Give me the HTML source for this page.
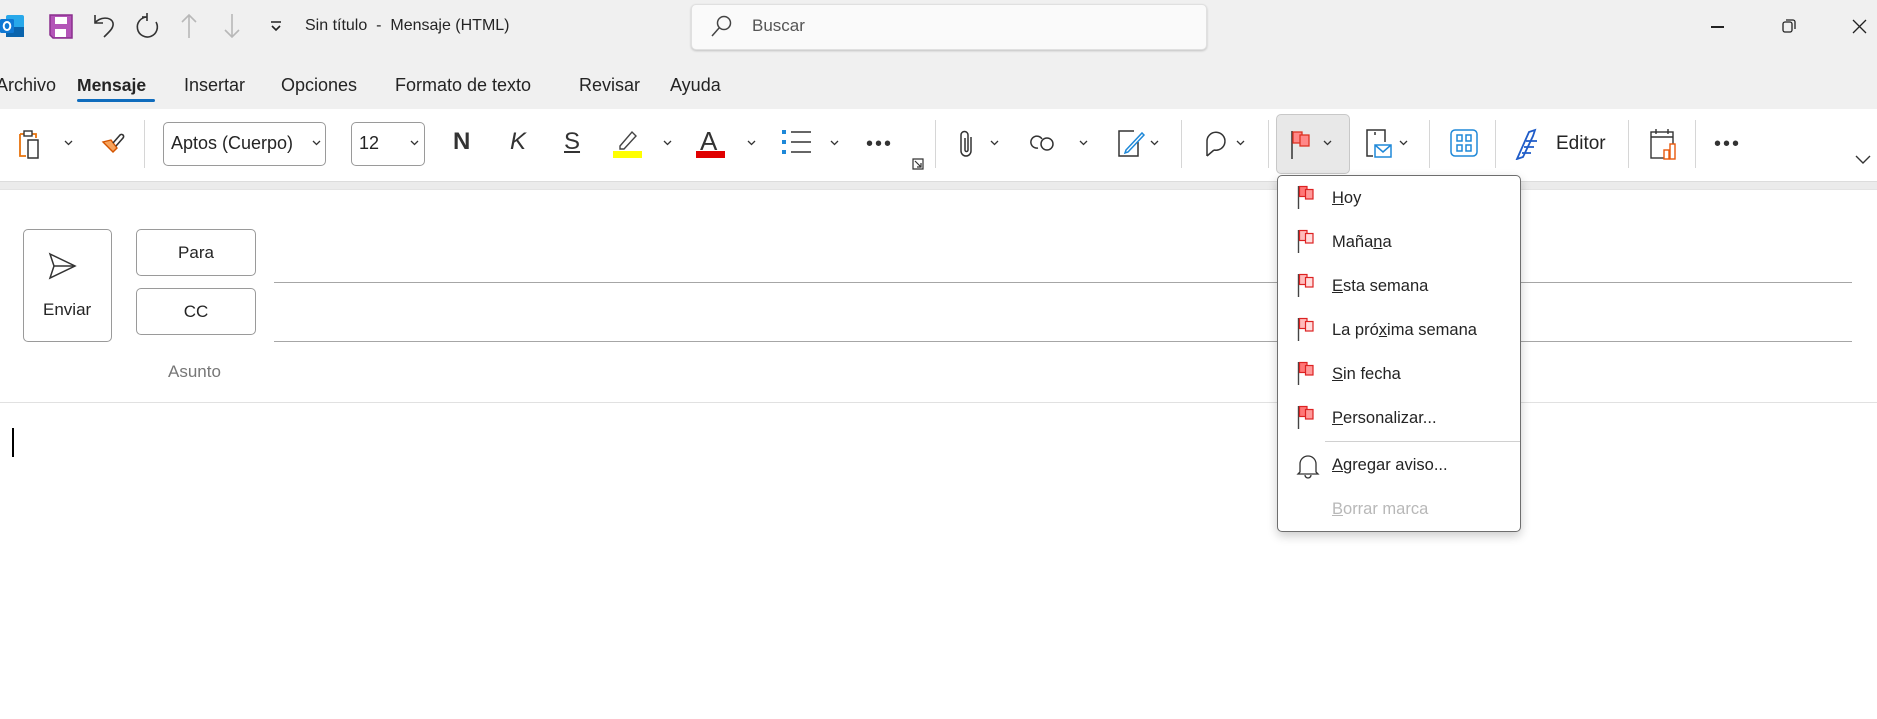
<!DOCTYPE html>
<html><head><meta charset="utf-8">
<style>
*{margin:0;padding:0;box-sizing:border-box}
body{width:1877px;height:719px;overflow:hidden;background:#fff;font-family:"Liberation Sans",sans-serif;color:#242424;position:relative}
.a{position:absolute}
.t{position:absolute;white-space:nowrap}
.top{left:0;top:0;width:1877px;height:109px;background:#f0f0f0}
.rib{left:0;top:109px;width:1877px;height:72px;background:#fff}
.band{left:0;top:181px;width:1877px;height:9px;background:#ebebeb;border-top:1px solid #dcdcdc;border-bottom:1px solid #e3e3e3}
.sep{position:absolute;top:120px;width:1px;height:48px;background:#d6d6d6}
.chev{position:absolute;top:140px;width:9px;height:6px}
.tab{position:absolute;top:75px;font-size:18px;color:#242424}
.mi{position:absolute;left:1332px;font-size:16.5px;color:#242424}
.fl{position:absolute;left:1297px}
</style></head><body>
<svg width="0" height="0" style="position:absolute"><defs>
<path id="cv" d="M1 1L4.5 4.5L8 1" fill="none" stroke="#333" stroke-width="1.3"/>
<g id="fg"><path d="M1.5 1V24" stroke="#444" stroke-width="1.4"/><rect x="2.5" y="1.5" width="7.5" height="10" fill="#f77" stroke="#d22" stroke-width="1.2"/><rect x="8.5" y="4.5" width="7.5" height="9.5" fill="#f99" stroke="#d22" stroke-width="1.2"/></g>
<g id="fl"><path d="M1.5 1V24" stroke="#444" stroke-width="1.4"/><rect x="2.5" y="1.5" width="7.5" height="10" fill="#fbb" stroke="#d22" stroke-width="1.2"/><rect x="8.5" y="4.5" width="7.5" height="9.5" fill="#fdd" stroke="#d22" stroke-width="1.2"/></g>
</defs></svg>
<div class="a top"></div>
<div class="a rib"></div>
<div class="a band"></div>

<!-- title bar icons -->
<svg class="a" style="left:0;top:13px" width="26" height="26" viewBox="0 0 26 26"><rect x="6" y="2" width="18" height="22" rx="2" fill="#28a8ea"/><path d="M6 14 L24 14 L24 24 L6 24Z" fill="#0a64ad"/><rect x="0" y="6" width="14" height="14" rx="1.5" fill="#0f78d4"/><ellipse cx="7" cy="13" rx="3.3" ry="4" fill="none" stroke="#fff" stroke-width="2"/></svg>
<svg class="a" style="left:49px;top:14px" width="25" height="25" viewBox="0 0 25 25"><path d="M1 1H23V24H4L1 21Z" fill="#b455b8" stroke="#8a2f8e" stroke-width="1.5"/><rect x="6" y="3" width="12" height="7" fill="#fff"/><rect x="6" y="15" width="11" height="8" fill="#fff"/></svg>
<svg class="a" style="left:92px;top:12px" width="26" height="28" viewBox="0 0 26 28" fill="none" stroke="#333" stroke-width="1.6"><path d="M3 3V11H11"/><path d="M3 11C7 5 19 4 21 11C22 16 17 20 12 25"/></svg>
<svg class="a" style="left:133px;top:12px" width="28" height="28" viewBox="0 0 28 28" fill="none" stroke="#333" stroke-width="1.6"><path d="M14 5A10 10 0 1 0 23 10"/><path d="M14 1V9" /><path d="M14 5H9"/></svg>
<svg class="a" style="left:179px;top:13px" width="20" height="26" viewBox="0 0 20 26" fill="none" stroke="#b8b8b8" stroke-width="1.6"><path d="M10 2V25M3 9L10 2L17 9"/></svg>
<svg class="a" style="left:222px;top:13px" width="20" height="26" viewBox="0 0 20 26" fill="none" stroke="#b8b8b8" stroke-width="1.6"><path d="M10 1V24M3 17L10 24L17 17"/></svg>
<svg class="a" style="left:270px;top:20px" width="12" height="12" viewBox="0 0 12 12" fill="none" stroke="#222" stroke-width="1.6"><path d="M1 2H11M2 6L6 10L10 6"/></svg>
<div class="t" style="left:305px;top:17px;font-size:16px">Sin título&nbsp; - &nbsp;Mensaje (HTML)</div>

<!-- search -->
<div class="a" style="left:691px;top:4px;width:516px;height:46px;background:#fafafa;border:1px solid #e0e0e0;border-radius:5px;box-shadow:0 1px 2px rgba(0,0,0,.2)"></div>
<svg class="a" style="left:710px;top:14px" width="24" height="24" viewBox="0 0 24 24" fill="none" stroke="#444" stroke-width="1.5"><circle cx="14" cy="9" r="6.5"/><path d="M9.5 13.5L2 22"/></svg>
<div class="t" style="left:752px;top:16px;font-size:17px;color:#555">Buscar</div>

<!-- window controls -->
<div class="a" style="left:1711px;top:26px;width:13px;height:1.5px;background:#222"></div>
<svg class="a" style="left:1781px;top:18px" width="16" height="16" viewBox="0 0 16 16" fill="none" stroke="#222" stroke-width="1.3"><rect x="2" y="4" width="9" height="10" rx="2"/><path d="M5 2H12A2 2 0 0 1 14 4V11"/></svg>
<svg class="a" style="left:1852px;top:19px" width="15" height="15" viewBox="0 0 15 15" stroke="#222" stroke-width="1.3"><path d="M1 1L14 14M14 1L1 14"/></svg>

<!-- tabs -->
<div class="tab" style="left:-4px">Archivo</div>
<div class="tab" style="left:77px;font-weight:bold;font-size:17.5px">Mensaje</div>
<div class="a" style="left:77px;top:99px;width:78px;height:3px;background:#0f6cbd;border-radius:2px"></div>
<div class="tab" style="left:184px">Insertar</div>
<div class="tab" style="left:281px">Opciones</div>
<div class="tab" style="left:395px">Formato de texto</div>
<div class="tab" style="left:579px">Revisar</div>
<div class="tab" style="left:670px">Ayuda</div>

<!-- ribbon -->
<svg class="a" style="left:16px;top:130px" width="28" height="30" viewBox="0 0 28 30" fill="none"><path d="M4 4H8M16 4H20V8" stroke="#e8730c" stroke-width="1.8"/><path d="M4 4V26H10" stroke="#e8730c" stroke-width="1.8"/><rect x="8" y="1" width="8" height="5" stroke="#333" stroke-width="1.4" fill="#fff"/><rect x="12" y="10" width="10" height="18" stroke="#333" stroke-width="1.5" fill="#fff"/></svg>
<svg class="chev" style="left:64px"><use href="#cv"/></svg>
<svg class="a" style="left:99px;top:130px" width="28" height="28" viewBox="0 0 28 28"><path d="M4 12L14 22L18 18L12 10Z" fill="#f7a35c" stroke="#d35400" stroke-width="1.4"/><path d="M14 13L21 5A2 2 0 0 1 24 8L17 16" fill="none" stroke="#333" stroke-width="1.6"/></svg>
<div class="sep" style="left:144px"></div>
<div class="a" style="left:163px;top:122px;width:163px;height:44px;border:1px solid #9a9a9a;border-radius:5px"></div>
<div class="t" style="left:171px;top:133px;font-size:18px">Aptos (Cuerpo)</div>
<svg class="chev" style="left:312px"><use href="#cv"/></svg>
<div class="a" style="left:351px;top:122px;width:74px;height:44px;border:1px solid #9a9a9a;border-radius:5px"></div>
<div class="t" style="left:359px;top:133px;font-size:18px">12</div>
<svg class="chev" style="left:410px"><use href="#cv"/></svg>
<div class="t" style="left:453px;top:128px;font-size:24px;font-weight:bold;color:#333">N</div>
<div class="t" style="left:510px;top:128px;font-size:24px;font-style:italic;color:#333">K</div>
<div class="t" style="left:564px;top:128px;font-size:24px;color:#333;text-decoration:underline">S</div>
<svg class="a" style="left:612px;top:128px" width="30" height="32" viewBox="0 0 30 32"><path d="M8 18L20 4L24 8L12 21L8 21Z" fill="none" stroke="#444" stroke-width="1.4"/><rect x="1" y="23" width="29" height="7" fill="#ffff00"/></svg>
<svg class="chev" style="left:663px"><use href="#cv"/></svg>
<div class="t" style="left:700px;top:126px;font-size:26px;color:#333">A</div>
<div class="a" style="left:696px;top:151px;width:29px;height:7px;background:#e00000"></div>
<svg class="chev" style="left:747px"><use href="#cv"/></svg>
<svg class="a" style="left:782px;top:129px" width="30" height="28" viewBox="0 0 30 28"><rect x="0" y="1" width="4" height="4" fill="#1e88d8"/><rect x="0" y="11" width="4" height="4" fill="#1e88d8"/><rect x="0" y="21" width="4" height="4" fill="#1e88d8"/><path d="M9 3H29M9 13H29M9 23H29" stroke="#333" stroke-width="1.6"/></svg>
<svg class="chev" style="left:830px"><use href="#cv"/></svg>
<div class="t" style="left:866px;top:133px;font-size:20px;letter-spacing:2px;color:#333">•••</div>
<svg class="a" style="left:912px;top:158px" width="12" height="12" viewBox="0 0 12 12" fill="none" stroke="#333" stroke-width="1.2"><path d="M1 1H11V11H1Z"/><path d="M3 3L9 9M9 5V9H5"/></svg>
<div class="sep" style="left:935px"></div>
<svg class="a" style="left:957px;top:129px" width="20" height="30" viewBox="0 0 20 30" fill="none" stroke="#333" stroke-width="1.5"><path d="M14 8V22A5 5 0 0 1 4 22V6A3.5 3.5 0 0 1 11 6V21A1.5 1.5 0 0 1 8 21V9"/></svg>
<svg class="chev" style="left:990px"><use href="#cv"/></svg>
<svg class="a" style="left:1030px;top:131px" width="30" height="24" viewBox="0 0 30 24" fill="none" stroke="#333" stroke-width="1.5"><path d="M12 8A6 6 0 1 0 8 17"/><circle cx="17" cy="13" r="6"/></svg>
<svg class="chev" style="left:1079px"><use href="#cv"/></svg>
<svg class="a" style="left:1116px;top:128px" width="30" height="32" viewBox="0 0 30 32" fill="none"><path d="M18 3H3V28H22V14" stroke="#333" stroke-width="1.5"/><path d="M10 22L26 5L28 7L12 24L9 25Z" stroke="#1e88d8" stroke-width="1.5"/></svg>
<svg class="chev" style="left:1150px"><use href="#cv"/></svg>
<div class="sep" style="left:1181px"></div>
<svg class="a" style="left:1201px;top:128px" width="30" height="32" viewBox="0 0 30 32" fill="none" stroke="#333" stroke-width="1.5"><path d="M6 28V14A9 9 0 1 1 13 22"/><path d="M6 28L13 22"/></svg>
<svg class="chev" style="left:1236px"><use href="#cv"/></svg>
<div class="sep" style="left:1268px"></div>
<div class="a" style="left:1276px;top:114px;width:74px;height:60px;background:#e8e8e8;border:1px solid #c8c8c8;border-radius:5px"></div>
<svg class="a" style="left:1290px;top:130px" width="24" height="30" viewBox="0 0 24 30"><path d="M2 1V29" stroke="#333" stroke-width="1.5"/><rect x="3" y="2" width="9" height="11" fill="#f88" stroke="#d32" stroke-width="1.3"/><rect x="10" y="5" width="9" height="11" fill="#f88" stroke="#d32" stroke-width="1.3"/></svg>
<svg class="chev" style="left:1323px"><use href="#cv"/></svg>
<svg class="a" style="left:1365px;top:128px" width="30" height="32" viewBox="0 0 30 32" fill="none"><path d="M2 18V2H20V14M2 18V28H8" stroke="#333" stroke-width="1.5"/><path d="M10 4V7" stroke="#333" stroke-width="1.5"/><rect x="10" y="17" width="16" height="12" stroke="#1e88d8" stroke-width="1.5" fill="#fff"/><path d="M10 17L18 24L26 17" stroke="#1e88d8" stroke-width="1.5"/></svg>
<svg class="chev" style="left:1399px"><use href="#cv"/></svg>
<div class="sep" style="left:1429px"></div>
<svg class="a" style="left:1450px;top:129px" width="28" height="28" viewBox="0 0 28 28" fill="none" stroke="#1e88d8" stroke-width="1.5"><rect x="1" y="1" width="26" height="26" rx="4"/><rect x="7" y="6" width="5" height="6"/><rect x="16" y="6" width="5" height="6"/><rect x="7" y="16" width="5" height="6"/><rect x="16" y="16" width="5" height="6"/></svg>
<div class="sep" style="left:1495px"></div>
<svg class="a" style="left:1515px;top:128px" width="28" height="32" viewBox="0 0 28 32" fill="none" stroke="#1f5cc8" stroke-width="1.8"><path d="M2 31L14 4L20 2L18 8L8 29Z"/><path d="M11 13H22M9 19H19M7 25H16"/></svg>
<div class="t" style="left:1556px;top:133px;font-size:19px">Editor</div>
<div class="sep" style="left:1628px"></div>
<svg class="a" style="left:1649px;top:128px" width="30" height="32" viewBox="0 0 30 32" fill="none"><rect x="2" y="4" width="22" height="26" stroke="#333" stroke-width="1.4"/><path d="M2 9H24M7 1V6M19 1V6" stroke="#333" stroke-width="1.4"/><rect x="15" y="22" width="5" height="9" fill="#fff" stroke="#e8590c" stroke-width="1.4"/><rect x="21" y="16" width="5" height="15" fill="#fff" stroke="#e8590c" stroke-width="1.4"/></svg>
<div class="sep" style="left:1695px"></div>
<div class="t" style="left:1714px;top:133px;font-size:20px;letter-spacing:2px;color:#333">•••</div>
<svg class="a" style="left:1855px;top:155px" width="16" height="10" viewBox="0 0 16 10" fill="none" stroke="#333" stroke-width="1.4"><path d="M1 1L8 8L15 1"/></svg>

<!-- compose -->
<div class="a" style="left:23px;top:229px;width:89px;height:113px;border:1px solid #9a9a9a;border-radius:5px"></div>
<svg class="a" style="left:47px;top:251px" width="30" height="30" viewBox="0 0 30 30" fill="none" stroke="#333" stroke-width="1.5"><path d="M3 3L28 15L3 27L7 15Z"/><path d="M7 15H28"/></svg>
<div class="t" style="left:43px;top:300px;font-size:17px">Enviar</div>
<div class="a" style="left:136px;top:229px;width:120px;height:47px;border:1px solid #9a9a9a;border-radius:5px;font-size:17px;text-align:center;line-height:45px">Para</div>
<div class="a" style="left:136px;top:288px;width:120px;height:47px;border:1px solid #9a9a9a;border-radius:5px;font-size:17px;text-align:center;line-height:45px">CC</div>
<div class="t" style="left:168px;top:362px;font-size:17px;color:#777">Asunto</div>
<div class="a" style="left:274px;top:282px;width:1578px;height:1px;background:#a6a6a6"></div>
<div class="a" style="left:274px;top:341px;width:1578px;height:1px;background:#a6a6a6"></div>
<div class="a" style="left:0;top:402px;width:1877px;height:1px;background:#e1e1e1"></div>
<div class="a" style="left:12px;top:428px;width:1.5px;height:29px;background:#000"></div>

<!-- dropdown menu -->
<div class="a" style="left:1277px;top:175px;width:244px;height:357px;background:#fff;border:1px solid #6e6e6e;border-radius:5px;box-shadow:0 4px 10px rgba(0,0,0,.2)"></div>
<svg class="fl" style="top:185px" width="18" height="26"><use href="#fg"/></svg>
<svg class="fl" style="top:229px" width="18" height="26"><use href="#fl"/></svg>
<svg class="fl" style="top:273px" width="18" height="26"><use href="#fl"/></svg>
<svg class="fl" style="top:317px" width="18" height="26"><use href="#fl"/></svg>
<svg class="fl" style="top:361px" width="18" height="26"><use href="#fg"/></svg>
<svg class="fl" style="top:405px" width="18" height="26"><use href="#fg"/></svg>
<div class="mi" style="top:189px"><u>H</u>oy</div>
<div class="mi" style="top:233px">Maña<u>n</u>a</div>
<div class="mi" style="top:277px"><u>E</u>sta semana</div>
<div class="mi" style="top:321px">La pró<u>x</u>ima semana</div>
<div class="mi" style="top:365px"><u>S</u>in fecha</div>
<div class="mi" style="top:409px"><u>P</u>ersonalizar...</div>
<div class="a" style="left:1325px;top:441px;width:195px;height:1px;background:#d0d0d0"></div>
<svg class="a" style="left:1296px;top:453px" width="24" height="26" viewBox="0 0 24 26" fill="none" stroke="#333" stroke-width="1.3"><path d="M4 19V11A8 8 0 0 1 20 11V19L22 21H2Z"/><path d="M9 22A3 3 0 0 0 15 22"/></svg>
<div class="mi" style="top:456px"><u>A</u>gregar aviso...</div>
<div class="mi" style="top:500px;color:#b8b8b8"><u>B</u>orrar marca</div>
</body></html>
